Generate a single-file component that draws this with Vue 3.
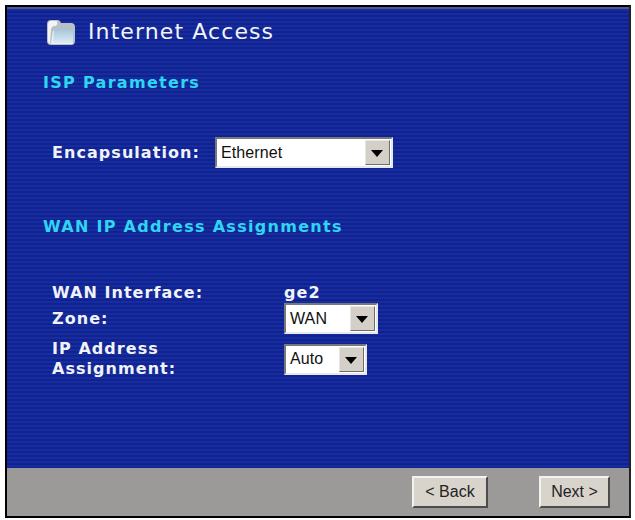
<script setup>
const rows = [
  { label: 'WAN Interface:', value: 'ge2' },
  { label: 'Zone:', select: 'WAN', width: 'w-wan' },
  { label: 'IP Address Assignment:', select: 'Auto', width: 'w-auto', tall: true },
]
</script>

<template>
  <div class="page">
    <div class="frame">
      <main class="panel">
        <header class="title">
          <svg class="folder" width="28" height="25" viewBox="0 0 28 25">
            <defs>
              <linearGradient id="face" x1="0" y1="0" x2="0" y2="1">
                <stop offset="0" stop-color="#a4c6da"/>
                <stop offset="1" stop-color="#dcebf3"/>
              </linearGradient>
            </defs>
            <path d="M0 4 Q0 0 4 0 H11 Q13 0 14 3 H24 Q28 3 28 7 V21 Q28 25 24 25 H4 Q0 25 0 21 Z" fill="#b9c0c6"/>
            <path d="M1 5 Q1 1 4 1 H10 Q11 4 9 6 H7 Q5 6 4 9 L3 24 Q1 23 1 21 Z" fill="#f3f4f4"/>
            <path d="M6 11 Q6 9 8 9 H24 Q26 9 26 11 V23 H5 Z" fill="url(#face)"/>
            <path d="M4 24 L6 11 H7 L6 23 H26 V24 Z" fill="#eef2f4"/>
          </svg>
          <h1>Internet Access</h1>
        </header>

        <h2 class="isp">ISP Parameters</h2>
        <div class="encap">
          <span class="label">Encapsulation:</span>
          <div class="select w-eth"><span class="val">Ethernet</span><span class="arrow"></span></div>
        </div>

        <h2 class="wan">WAN IP Address Assignments</h2>
        <div class="rows">
          <div v-for="r in rows" :key="r.label" class="row" :class="{ tall: r.tall }">
            <span class="label cell">{{ r.label }}</span>
            <span v-if="r.value" class="label">{{ r.value }}</span>
            <div v-else class="select" :class="r.width"><span class="val">{{ r.select }}</span><span class="arrow"></span></div>
          </div>
        </div>
      </main>
      <footer class="foot">
        <button class="btn back">&lt; Back</button>
        <button class="btn next">Next &gt;</button>
      </footer>
    </div>
  </div>
</template>

<style>
html, body { margin: 0; background: #fff; }
</style>

<style scoped>
.page { width: 635px; height: 520px; padding: 5px 4px 2px 5px; box-sizing: border-box; }
.frame { height: 100%; box-sizing: border-box; border-left: 2px solid #000; border-top: 2px solid #000; border-bottom: 2px solid #000; border-right: 2px solid #222; display: flex; flex-direction: column; }
.panel {
  flex: 1;
  min-height: 0;
  border-top: 2px solid #4c5c92;
  background: repeating-linear-gradient(180deg, #172d9f 0, #172d9f 2px, #0f2290 2px, #0f2290 4px);
  padding: 10px 0 0 0;
  font-family: "DejaVu Sans", sans-serif;
}
.title { display: flex; align-items: center; margin-left: 40px; height: 26px; gap: 13px; }
.folder { flex: none; }
h1 { margin: 0; font-size: 22px; font-weight: 400; color: #f2f4f8; letter-spacing: 1.1px; line-height: 26px; white-space: nowrap; }
h2 { margin: 0; font-size: 16px; font-weight: 700; color: #2fd6f2; letter-spacing: 1.3px; line-height: 18px; white-space: nowrap; }
.isp { margin: 29px 0 0 36px; }
.wan { margin: 50px 0 0 36px; }
.label { font-size: 16px; font-weight: 700; color: #f0f2f8; letter-spacing: 1.05px; line-height: 18px; }
.encap { display: flex; align-items: center; margin: 45px 0 0 45px; }
.encap .label { width: 163px; flex: none; white-space: nowrap; }
.rows { margin: 48px 0 0 45px; display: flex; flex-direction: column; gap: 1px; }
.row { display: flex; align-items: center; min-height: 18px; }
.cell { width: 232px; flex: none; }
.tall { margin-top: 4px; }
.tall .cell { width: 132px; margin-right: 100px; line-height: 20px; }
.select { box-sizing: border-box; height: 31px; display: flex; align-items: center; background: #fff; border: 2px solid; border-color: #77777c #e6e8f0 #e6e8f0 #77777c; padding: 1px; font-family: "Liberation Sans", sans-serif; font-size: 16px; color: #111; letter-spacing: .1px; }
.val { flex: 1; padding-left: 3px; }
.arrow { width: 25px; height: 100%; flex: none; background: #d4d0c8; border: 1px solid; border-color: #e8e6e0 #6e6c66 #6e6c66 #e8e6e0; box-sizing: border-box; position: relative; }
.arrow::after { content: ""; position: absolute; left: 5px; top: 9px; border: 6px solid transparent; border-top: 7px solid #000; border-bottom: 0; }
.w-eth { width: 178px; }
.w-wan { width: 94px; }
.w-auto { width: 83px; }
.foot { height: 48px; flex: none; background: #9c9a98; display: flex; justify-content: flex-end; align-items: center; gap: 51px; padding-right: 19px; }
.btn { height: 32px; padding: 0; background: #d8d4cc; border: 2px solid; border-color: #f4f2ee #4c4c4c #4c4c4c #f4f2ee; font-family: "Liberation Sans", sans-serif; font-size: 16px; color: #222; }
.back { width: 76px; }
.next { width: 71px; }
</style>
